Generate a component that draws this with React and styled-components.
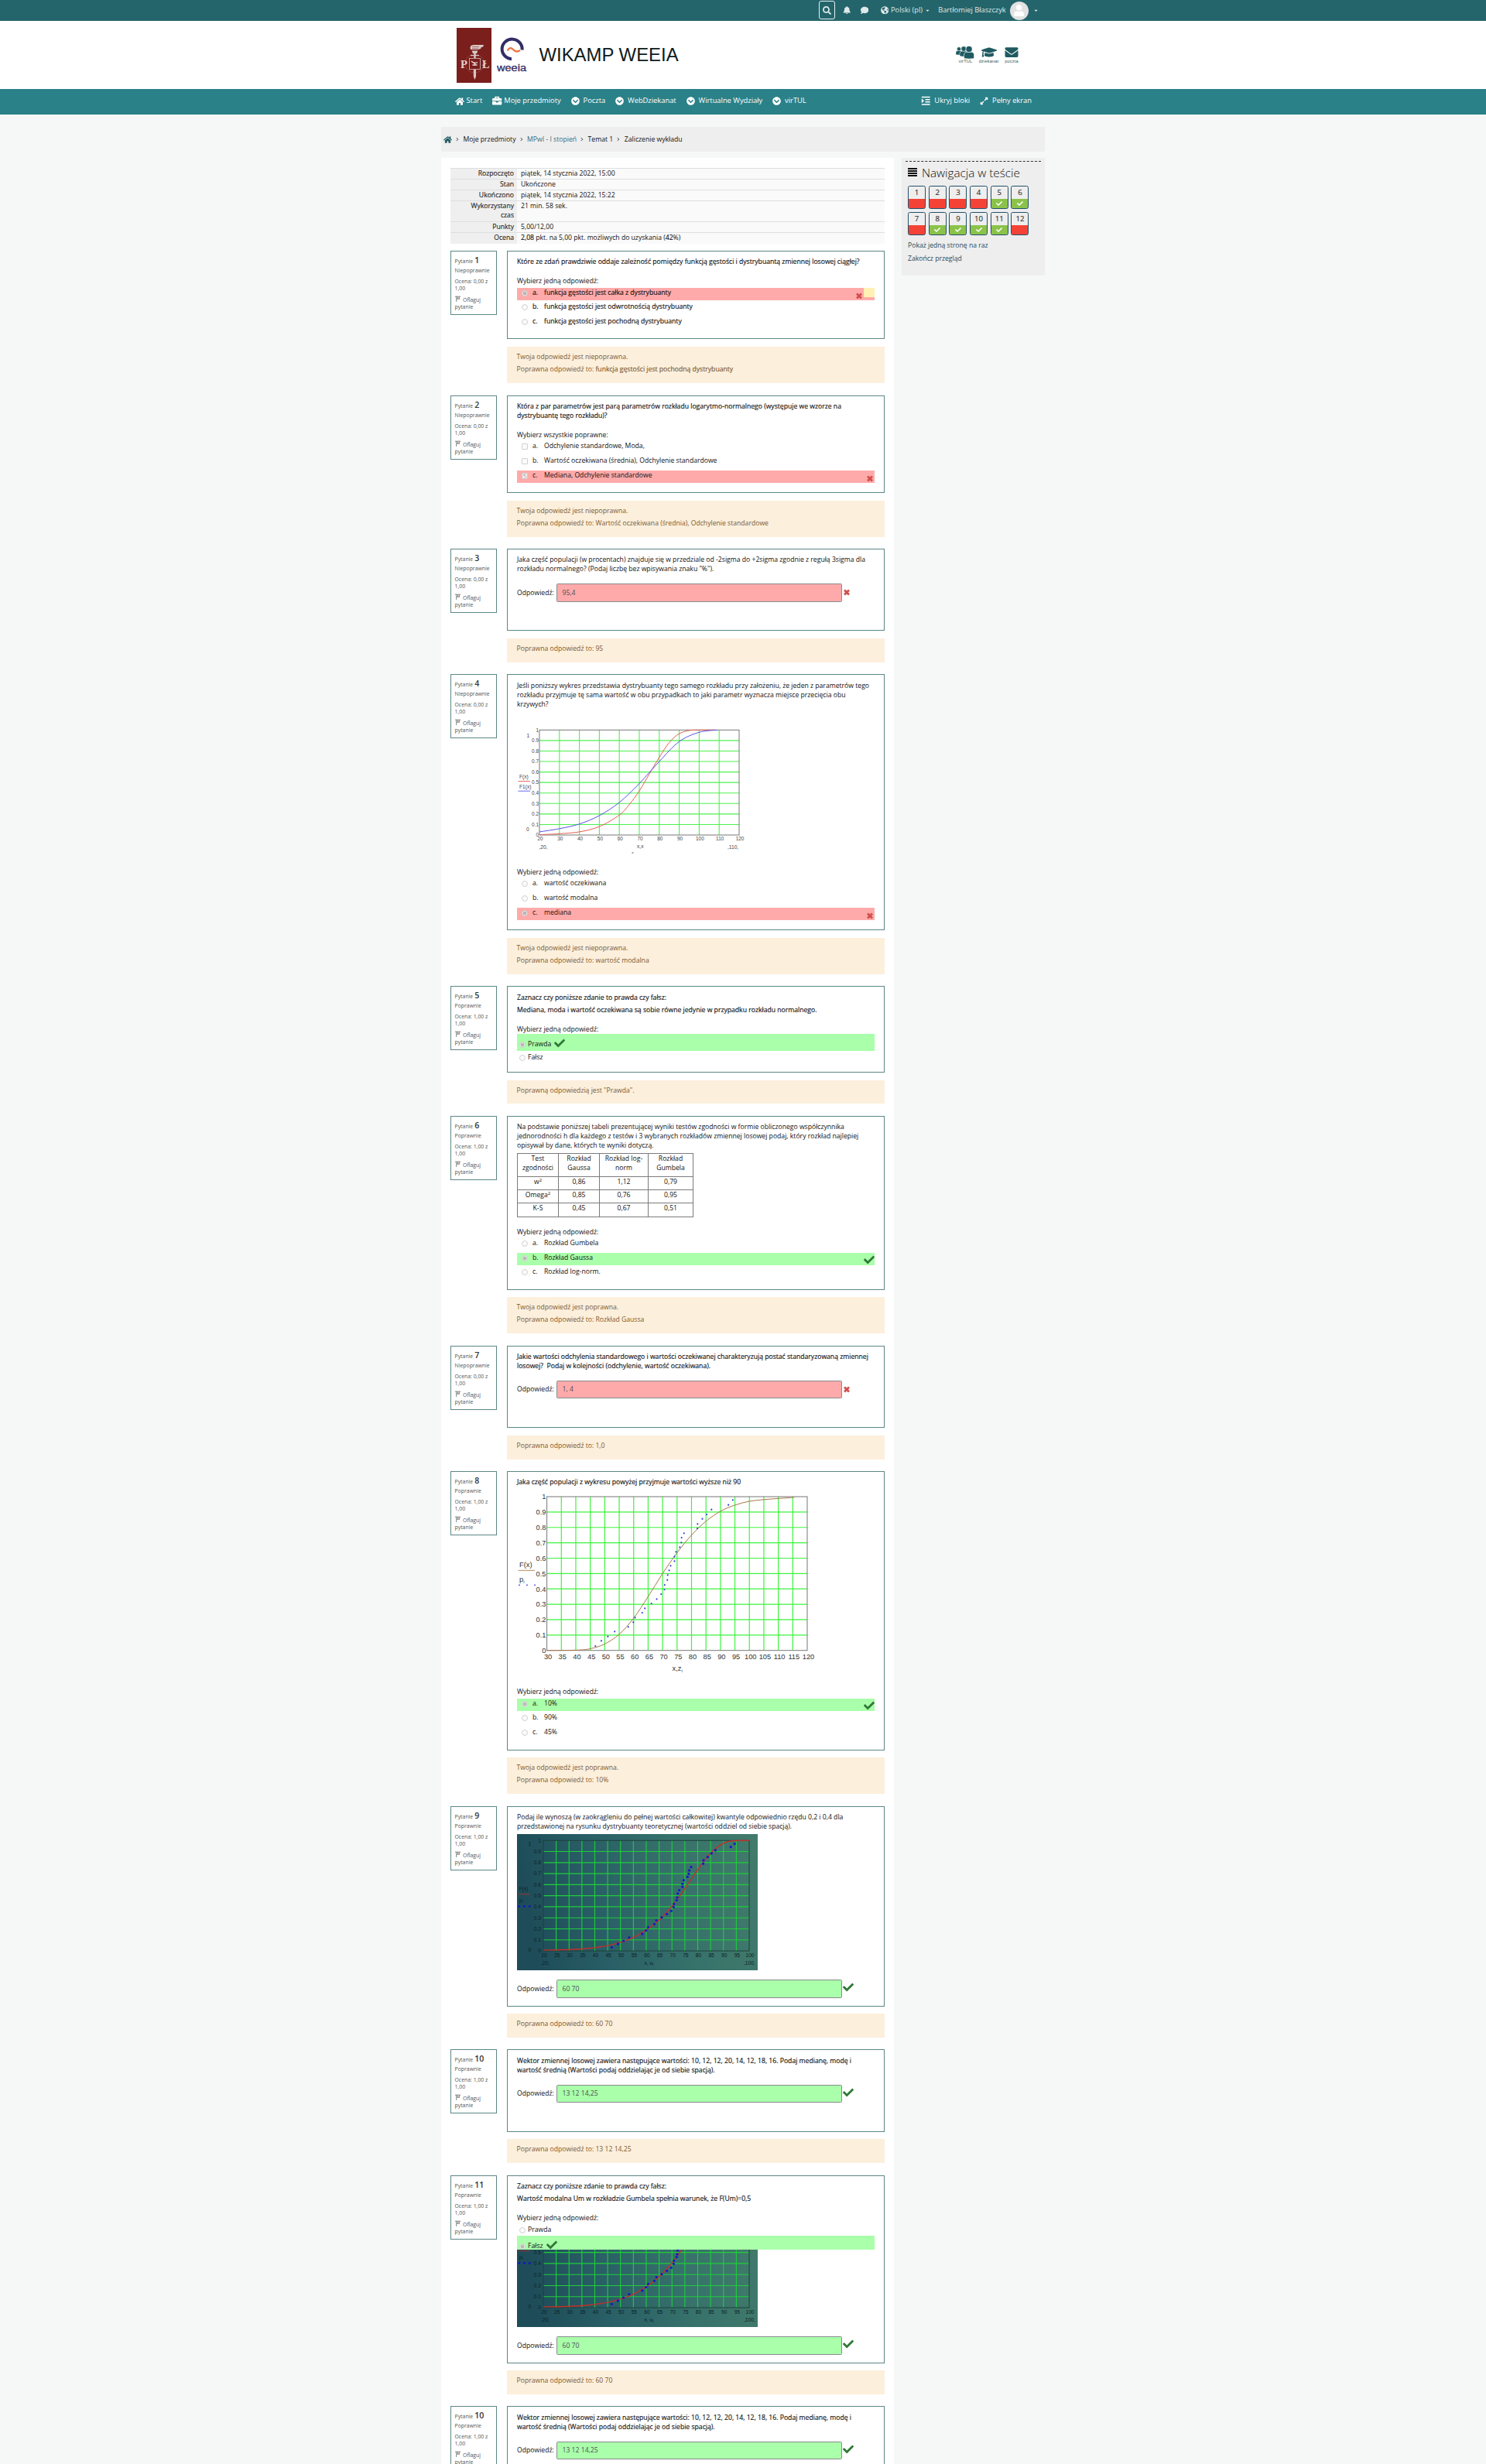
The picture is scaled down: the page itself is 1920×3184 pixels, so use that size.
import React from 'react';
import styled, { createGlobalStyle, css } from 'styled-components';
import {
  FaSearch, FaBell, FaComment, FaGlobeAmericas, FaHome, FaBriefcase,
  FaChevronCircleDown, FaIndent, FaExpandAlt, FaGraduationCap,
  FaEnvelope, FaCheck, FaCaretDown, FaUser,
} from 'react-icons/fa';

const sans = '"Open Sans", "Noto Sans", sans-serif';
const teal = '#5b8786';
const OK = '#aaffaa';
const BAD = '#ffaaaa';

const Global = createGlobalStyle`
  * { box-sizing: border-box; }
  body { margin: 0; background: #f6f8f8; font: 400 8.63px/12px ${sans}; color: #111; }
`;

const Page = styled.div`
  height: 3184px;
  overflow: hidden;
`;
const Inner = styled.div`
  width: 780px;
  margin: 0 auto;
  display: flex;
  align-items: center;
`;

/* ---------- top bar ---------- */
const TopBar = styled.header`
  background: #24656c;
  height: 27px;
  color: #dfe9ea;
  font-size: 9.27px;
  & > div { height: 26px; padding-left: 488px; }
  svg { display: block; flex: none; }
`;
const SearchButton = styled.span`
  width: 21px;
  height: 24px;
  border: 1px solid #e8f0f0;
  border-radius: 3px;
  display: flex;
  align-items: center;
  justify-content: center;
  margin-right: 10px;
`;
const BarItem = styled.span`
  display: flex;
  align-items: center;
  gap: 3px;
  white-space: nowrap;
  margin-right: ${(p) => p.$after || 0}px;
`;
const Avatar = styled.span`
  width: 24px;
  height: 24px;
  border-radius: 50%;
  background: #e2e2e2;
  overflow: hidden;
  display: flex;
  justify-content: center;
  margin: 1px 3px 0 2px;
`;

/* ---------- brand row ---------- */
const Brand = styled.div`
  background: #fff;
  height: 88px;
  & > div { height: 88px; padding-left: 20px; }
`;
const Title = styled.h1`
  margin: 0 auto 0 16px;
  font: 400 23.9px/30px "Liberation Sans", Arial, sans-serif;
  color: #0d1a1c;
`;
const Weeia = styled.svg`
  margin-left: 6.5px;
`;
const Quick = styled.span`
  display: flex;
  flex-direction: column;
  align-items: center;
  width: ${(p) => p.$w}px;
  height: 25px;
  margin-right: ${(p) => p.$after || 0}px;
  font: 400 5.6px/7px "Liberation Sans", Arial, sans-serif;
  letter-spacing: 0.2px;
  color: #1f5a61;
  svg { height: 17px; display: block; }
`;

/* ---------- nav ---------- */
const Nav = styled.nav`
  background: #2b8188;
  height: 33px;
  color: #fff;
  font-size: 9.33px;
  & > div { height: 30px; padding: 0 17px 0 18px; gap: 13.2px; }
`;
const NavItem = styled.span`
  display: flex;
  align-items: center;
  gap: ${(p) => p.$gap || 4.7}px;
  white-space: nowrap;
  margin-left: ${(p) => (p.$push ? 'auto' : 0)};
  svg { display: block; margin-top: 1px; }
`;

/* ---------- breadcrumb ---------- */
const Crumbs = styled.div`
  width: 780px;
  height: 32px;
  margin: 16px auto 8px;
  background: #eee;
  display: flex;
  align-items: center;
  padding-left: 3px;
  white-space: nowrap;
  svg { color: #1f5a61; display: block; }
`;
const Sep = styled.i`
  width: 4px;
  height: 4px;
  margin: 0 6.6px 0 4px;
  border: solid #555;
  border-width: 1px 1px 0 0;
  transform: rotate(45deg) scale(0.8);
`;
const Crumb = styled.span`
  color: ${(p) => (p.$link ? '#3c6b78' : '#111')};
`;

/* ---------- body ---------- */
const Columns = styled.div`
  width: 780px;
  margin: 0 auto;
  display: flex;
  align-items: flex-start;
  gap: 10px;
`;
const Main = styled.main`
  width: 585px;
  min-height: 2980px;
  background: #fff;
  padding: 13px 12px 0;
`;
const Summary = styled.table`
  width: 561px;
  border-collapse: collapse;
  margin-bottom: 9px;
  table-layout: fixed;
  th, td { padding: 0; vertical-align: top; border-top: 1px solid #dcdfe0; line-height: 12px; }
  th { width: 86px; background: #efefef; text-align: right; padding-right: 4px; font-weight: 400; -webkit-text-stroke: 0.12px; color: #222; }
  td { background: #fafafa; padding-left: 5px; }
`;
const SummaryRow = styled.tr`
  height: ${(p) => p.$h}px;
`;
const Strong = styled.b`
  font-weight: 400;
  -webkit-text-stroke: 0.14px;
`;

const Question = styled.section`
  display: grid;
  grid-template-columns: 60px 488px;
  column-gap: 13px;
  align-items: start;
  margin-bottom: ${(p) => p.$after}px;
`;
const Info = styled.aside`
  height: 83px;
  border: 1px solid ${teal};
  padding: 5px 0 0 4.5px;
  font-size: 6.9px;
  line-height: 9px;
  color: #555;
  white-space: nowrap;
`;
const InfoLine = styled.div`
  height: ${(p) => p.$h || 9}px;
  line-height: ${(p) => p.$h || 9}px;
  margin-top: ${(p) => p.$mt || 0}px;
  display: flex;
  align-items: baseline;
  gap: ${(p) => p.$gap || 2}px;
  ${(p) => p.$seam && css`clip-path: inset(2.5px 0 0 0);`}
  b { font-size: 10.6px; font-weight: 600; color: #333; }
  svg { align-self: center; margin-top: -3px; }
`;
const Formulation = styled.div`
  height: ${(p) => p.$h}px;
  border: 1px solid ${teal};
  padding: 0 12px;
`;
const Outcome = styled.div`
  height: ${(p) => p.$h}px;
  margin-top: ${(p) => p.$gap}px;
  background: #fcefdc;
  color: #7d5a30;
  padding: 7px 12.5px;
  display: flex;
  flex-direction: column;
  gap: 4.4px;
`;
const Stem = styled.div`
  margin-top: ${(p) => p.$mt}px;
  white-space: pre;
  ${(p) => p.$strong && css`-webkit-text-stroke: 0.14px;`}
`;
const Options = styled.div`
  margin-top: ${(p) => p.$mt || 0}px;
`;
const Option = styled.div`
  height: 16px;
  margin-bottom: ${(p) => (p.$bg ? 2 : 3)}px;
  background: ${(p) => p.$bg || 'transparent'};
  display: flex;
  align-items: flex-start;
  padding: 0 0 0 6px;
  & > em { font-style: normal; width: 15px; margin-left: 6px; }
`;
const Mark = styled.span`
  margin-left: auto;
  padding: ${(p) => (p.$ok ? '2px 0 0 0' : '6px 1px 0 0')};
  line-height: 0;
`;
const Patch = styled.span`
  width: 14px;
  height: 12px;
  background: #fff0b3;
`;
const Choice = styled.div`
  height: ${(p) => p.$h}px;
  background: ${(p) => p.$bg || 'transparent'};
  padding: ${(p) => p.$pt}px 0 0 3px;
  display: flex;
  gap: 3px;
  overflow: hidden;
  & > svg { margin: -2px 0 0 1px; flex: none; }
`;
const Control = styled.i`
  flex: none;
  width: 8px;
  height: 8px;
  margin-top: 3px;
  border: 1px solid #ccc;
  border-radius: ${(p) => (p.$square ? 1 : 4)}px;
  background: ${(p) => (p.$on ? 'radial-gradient(circle, #b4b4b4 0 2px, #eee 2.6px)' : '#fbfbfb')};
  opacity: 0.9;
  svg { display: block; }
`;
const AnswerRow = styled.div`
  margin-top: ${(p) => p.$mt}px;
  display: flex;
  align-items: center;
  span { width: 51px; }
  svg { margin-left: 1px; margin-top: ${(p) => (p.$ok ? -3 : 0)}px; }
`;
const Field = styled.div`
  width: 369px;
  height: ${(p) => p.$h}px;
  line-height: ${(p) => p.$h - 2}px;
  border: 1px solid #888c8e;
  border-radius: 1.5px;
  background: ${(p) => p.$bg};
  color: #495057;
  padding-left: 6.5px;
`;
const Grid = styled.table`
  margin-top: 4px;
  border-collapse: collapse;
  table-layout: fixed;
  width: 227px;
  height: 83px;
  td { border: 1px solid #7b7b7b; text-align: center; vertical-align: top; padding: 0; line-height: 12px; }
  sup { font-size: 6px; line-height: 0; vertical-align: 3px; }
`;
const GridRow = styled.tr`
  height: ${(p) => p.$h}px;
`;
const Chart = styled.svg`
  display: block;
  margin-top: ${(p) => p.$mt || 0}px;
  overflow: hidden;
`;

/* ---------- sidebar ---------- */
const Side = styled.aside`
  width: 185px;
  height: 152px;
  background: #eee;
  padding: 4px 5px 0;
`;
const SideTitle = styled.h2`
  margin: 0 0 7px;
  border-top: 1px dashed #333;
  padding: 3px 0 0 3px;
  height: 25px;
  font: 300 15.26px/20px ${sans};
  color: #111;
  display: flex;
  align-items: center;
  gap: 6px;
`;
const Tiles = styled.div`
  display: grid;
  grid-template-columns: repeat(6, 23px);
  column-gap: 3.7px;
  row-gap: 4px;
  padding-left: 3px;
`;
const Tile = styled.span`
  height: 30px;
  border: 1px solid #23506a;
  border-radius: 2.5px;
  background: linear-gradient(#eee 0 16px, ${(p) => (p.$ok ? '#8bc34a' : '#f44336')} 16px);
  display: flex;
  flex-direction: column;
  align-items: center;
  font-size: 9.6px;
  line-height: 15px;
  color: #333;
  -webkit-text-stroke: 0.15px;
  svg { color: #fff; margin-top: 3px; }
`;
const SideLink = styled.div`
  margin: ${(p) => p.$mt}px 0 0 3px;
  color: #264a58;
`;

/* ---------- chart drawing ---------- */
function smooth(points) {
  let d = `M${points[0][0]} ${points[0][1]}`;
  for (let i = 0; i < points.length - 1; i += 1) {
    const a = points[Math.max(0, i - 1)];
    const b = points[i];
    const c = points[i + 1];
    const e = points[Math.min(points.length - 1, i + 2)];
    d += `C${b[0] + (c[0] - a[0]) / 6} ${b[1] + (c[1] - a[1]) / 6} ${c[0] - (e[0] - b[0]) / 6} ${c[1] - (e[1] - b[1]) / 6} ${c[0]} ${c[1]}`;
  }
  return d;
}
function scale(box, min, max) {
  return ([x, y]) => [
    box.x + ((x - min) / (max - min)) * box.w,
    box.y + (1 - y) * box.h,
  ];
}
function Axes({ box, min, max, step, size, grid, gridWidth, frame, ink, labelX, labelY, shift = 0, top = 0 }) {
  const xs = [];
  for (let v = min; v <= max; v += step) xs.push(v);
  const ys = Array.from({ length: 11 }, (_, i) => i / 10);
  const at = scale(box, min, max);
  return (
    <g fontFamily="Liberation Sans, Arial, sans-serif" fontSize={size} fill={ink}>
      {xs.slice(1, -1).map((v) => {
        const [x] = at([v, 0]);
        return <line key={v} x1={x} x2={x} y1={box.y} y2={box.y + box.h} stroke={grid} strokeWidth={gridWidth} />;
      })}
      {ys.slice(1, -1).map((v) => {
        const [, y] = at([min, v]);
        return <line key={v} x1={box.x} x2={box.x + box.w} y1={y} y2={y} stroke={grid} strokeWidth={gridWidth} />;
      })}
      <rect x={box.x} y={box.y} width={box.w} height={box.h} fill="none" stroke={frame} />
      {xs.map((v) => <text key={v} x={at([v, 0])[0] + shift} y={labelY} textAnchor="middle">{v}</text>)}
      {ys.filter((v) => at([min, v])[1] > top).map((v) => (
        <text key={v} x={labelX} y={at([min, v])[1] + size * 0.36} textAnchor="end">{v}</text>
      ))}
    </g>
  );
}

function TwoCurves() {
  const box = { x: 29, y: 13.3, w: 258, h: 135.7 };
  const at = scale(box, 20, 120);
  const red = [[20, 0.003], [30, 0.012], [40, 0.03], [50, 0.08], [60, 0.19], [65, 0.29], [70, 0.42], [75, 0.58], [80, 0.74], [85, 0.88], [90, 0.965], [95, 0.995], [100, 1], [108, 1]];
  const blue = [[20, 0.03], [30, 0.06], [40, 0.105], [50, 0.185], [60, 0.31], [70, 0.49], [80, 0.7], [90, 0.89], [100, 0.978], [109, 1]];
  return (
    <Chart $mt={14} width="300" height="176" fontFamily="Liberation Sans, Arial, sans-serif" fontSize="6.6" fill="#444">
      <Axes box={box} min={20} max={120} step={10} size={6.4} grid="#4cf24c" gridWidth={1.1} frame="#777" ink="#444" labelX={28} labelY={156.2} shift={1} />
      <path d={smooth(red.map(at))} fill="none" stroke="#e2604f" />
      <path d={smooth(blue.map(at))} fill="none" stroke="#5a52e6" />
      <text x="12.5" y="23">1</text>
      <text x="12" y="144">0</text>
      <text x="3" y="76">F(x)</text>
      <line x1="1.5" x2="17" y1="79.5" y2="79.5" stroke="#ea6a6a" />
      <text x="3" y="89">F1(x)</text>
      <line x1="1.5" x2="17" y1="92.2" y2="92.2" stroke="#6a6af0" />
      <text x="28.5" y="166.5">,20,</text>
      <text x="155" y="166">x,x</text>
      <text x="272" y="166.5">,110,</text>
      <rect x="148.5" y="171.5" width="2" height="1" />
    </Chart>
  );
}

const dotsA = [[547, 771], [567, 751], [589, 734], [612, 715], [658, 697], [675, 679], [681, 661], [705, 642], [714, 625], [736, 606], [754, 589], [769, 570], [780, 552], [781, 534], [790, 515], [791, 496], [796, 478], [801, 460], [814, 442], [814, 424], [819, 406], [832, 388], [837, 370], [838, 351], [846, 334], [891, 315], [892, 298], [908, 278], [923, 261], [939, 242], [996, 224], [1011, 205]]
  .map(([x, y]) => [x / 2.6133 - 108, y / 3 - 56]);
const dotsB = [[602, 619], [623, 606], [642, 594], [661, 581], [705, 567], [718, 554], [725, 541], [746, 529], [753, 515], [771, 503], [788, 490], [803, 478], [811, 463], [812, 451], [821, 437], [823, 426], [825, 411], [830, 398], [841, 385], [841, 373], [845, 359], [858, 346], [862, 334], [864, 321], [870, 308], [911, 295], [912, 282], [926, 269], [939, 255], [952, 243], [1004, 230], [1017, 218]]
  .map(([x, y]) => [x / 2.6133 - 108, y / 3 - 60]);

function Population() {
  const box = { x: 38.6, y: 8, w: 336.4, h: 198.7 };
  const at = scale(box, 30, 120);
  const curve = [[30, 0], [40, 0.002], [45, 0.011], [50, 0.042], [55, 0.105], [60, 0.21], [65, 0.35], [70, 0.5], [75, 0.635], [80, 0.75], [85, 0.84], [90, 0.905], [95, 0.945], [100, 0.97], [105, 0.981], [110, 0.988], [115.5, 0.995]];
  return (
    <Chart $mt={5} width="400" height="236" fontFamily="Liberation Sans, Arial, sans-serif" fontSize="9.4" fill="#333">
      <Axes box={box} min={30} max={120} step={5} size={9.3} grid="#3df43d" gridWidth={1.2} frame="#777" ink="#333" labelX={37.5} labelY={218} shift={1.5} />
      <path d={smooth(curve.map(at))} fill="none" stroke="#a9764a" />
      {dotsA.map(([x, y]) => <circle key={`${x} ${y}`} cx={x} cy={y} r="1.05" fill="#3030e0" />)}
      <text x="3" y="99">F(x)</text>
      <line x1="1.5" x2="23" y1="103.3" y2="103.3" stroke="#b88a60" />
      <text x="3" y="117.5">p<tspan fontSize="6" dy="2">i</tspan></text>
      {[3, 13, 23].map((x) => <circle key={x} cx={x} cy="122.3" r="1" fill="#6a5ae8" />)}
      <text x="200.5" y="233">x,z<tspan fontSize="6" dy="2">i</tspan></text>
    </Chart>
  );
}

function Quantiles({ top = 0, mt = 0 }) {
  const box = { x: 34, y: 8.3, w: 266, h: 142.7 };
  const at = scale(box, 20, 100);
  const id = `shade${top}`;
  const curve = [[20, 0.008], [27, 0.01], [35, 0.018], [40, 0.03], [45, 0.048], [50, 0.078], [55, 0.122], [60, 0.19], [65, 0.28], [70, 0.405], [75, 0.565], [80, 0.735], [85, 0.885], [90, 0.975], [94, 0.998], [100, 1]];
  return (
    <Chart $mt={mt} width="311" height={176 - top} viewBox={`0 ${top} 311 ${176 - top}`} fontFamily="Liberation Sans, Arial, sans-serif" fontSize="6.6" fill="#0c2026">
      <defs>
        <linearGradient id={id} x1="0" y1="0.1" x2="1" y2="0">
          <stop offset="0" stopColor="#1e4d59" />
          <stop offset="0.3" stopColor="#295f66" />
          <stop offset="0.65" stopColor="#37726b" />
          <stop offset="1" stopColor="#427b6b" />
        </linearGradient>
      </defs>
      <rect width="311" height="176" fill={`url(#${id})`} />
      <Axes box={box} min={20} max={100} step={5} size={6.6} grid="#1fce3a" gridWidth={1.1} frame="#1c4238" ink="#0c2026" labelX={31} labelY={159} shift={1} top={top} />
      <path d={smooth(curve.map(at))} fill="none" stroke="#c22f2c" strokeWidth="1.4" />
      {dotsB.filter(([, y]) => y > top - 1).map(([x, y]) => (
        <rect key={`${x} ${y}`} x={x - 1.5} y={y - 1.4} width="3" height="2.8" rx="0.8" fill="#1418c8" />
      ))}
      {top === 0 && <text x="14.5" y="14.5">1</text>}
      <text x="14.5" y="151.5">0</text>
      {top === 0 && <text x="2.5" y="73">F(x)</text>}
      <line x1="2" x2="17" y1="77.7" y2="77.7" stroke="#a03030" />
      <text x="3" y="88">p<tspan fontSize="4.5" dy="1">i</tspan></text>
      {[2.8, 9.5, 16.3].map((x) => <rect key={x} x={x - 1.5} y="92" width="3" height="2.8" rx="0.8" fill="#1418c8" />)}
      <text x="31" y="169">,20,</text>
      <text x="164.5" y="169">x, u<tspan fontSize="4.5" dy="1">i</tspan></text>
      <text x="293" y="169">,100,</text>
    </Chart>
  );
}

/* ---------- logos and icons ---------- */
function UniversityLogo() {
  return (
    <svg width="45" height="71" viewBox="0 0 45 71">
      <rect width="45" height="71" fill="#7a1f1c" />
      <g fill="none" stroke="#b98c88" strokeWidth="0.8">
        <circle cx="23.3" cy="46" r="12" strokeDasharray="2 1" opacity="0.6" />
        <rect x="16.5" y="39.5" width="14" height="14" fill="#7a1f1c" stroke="#d8c2c0" />
      </g>
      <path d="M18 28q-2-6 4-6h13q0 2.500-4 3.500q2 1-3 2.500z" fill="#d8c6c4" />
      <path d="M20 24.500h9M20 26.700h8" stroke="#7a1f1c" strokeWidth="0.5" />
      <path d="M19.500 29.500h8l-1.500 3.500h-5zM22.300 33h2.400v6h-2.400zM18 35h11v1.200h-11zM21.800 54h3.200v9l-1.600 4l-1.600-4z" fill="#d8c6c4" />
      <path d="M19 43q4 4 8 1.500M20.500 48h6M23.500 44.500v4" stroke="#eee2e0" strokeWidth="1.4" fill="none" />
      <g fill="#e2d2d0" fontFamily="Liberation Serif, Times New Roman, serif" fontWeight="700" fontSize="15">
        <text x="5" y="52" textLength="9" lengthAdjust="spacingAndGlyphs">P</text>
        <text x="33" y="52" textLength="9.5" lengthAdjust="spacingAndGlyphs">Ł</text>
      </g>
    </svg>
  );
}
function FacultyLogo() {
  return (
    <Weeia width="39" height="46" viewBox="0 0 39 46">
      <path d="M32.600 16.500A13 12.800 0 1 0 19 28.200" fill="none" stroke="#322e66" strokeWidth="4" />
      <path d="M13.500 17.500q3.500-6 7.500-1.500t9 1" fill="none" stroke="#ee7442" strokeWidth="2.300" />
      <text x="0" y="44" textLength="38" lengthAdjust="spacingAndGlyphs" fontFamily="Liberation Sans, Arial, sans-serif" fontSize="12" fill="#322e66" stroke="#322e66" strokeWidth="0.300">weeia</text>
      <path d="M12.500 40.500q2-1.600 3 0t3-.5" fill="none" stroke="#ee7442" strokeWidth="1" />
    </Weeia>
  );
}
function PeopleIcon() {
  const person = (x, y, s) => (
    <g transform={`translate(${x} ${y}) scale(${s})`} stroke="#fff" strokeWidth="0.800">
      <path d="M0 20v-5q0-5 5-5h6q5 0 5 5v5q-8 2-16 0z" />
      <circle cx="8" cy="5.500" r="5" />
    </g>
  );
  return (
    <svg width="25" height="17" viewBox="0 0 25 17" fill="#1f5a61">
      {person(0, 1.5, 0.5)}
      {person(5, 0.5, 0.65)}
      {person(10.5, 0, 0.82)}
    </svg>
  );
}
const Cross = () => (
  <svg width="10" height="9" viewBox="0 0 10 9" stroke="#d2504e" strokeWidth="2.900">
    <path d="M2 1.500l6 6M8 1.500l-6 6" />
  </svg>
);
const Tick = ({ size = 14 }) => <FaCheck size={size} color="#2f7a35" />;
const Flag = () => (
  <svg width="7" height="8" viewBox="0 0 7 8" fill="none" stroke="#777" strokeWidth="0.900">
    <path d="M1.700 8V1M0 1.200h6.800L4.800 3L6 4.200H2M3.500 1.500v2.500" />
  </svg>
);
const Bars = () => (
  <svg width="12" height="11" viewBox="0 0 12 11" stroke="#111" strokeWidth="1.900">
    <path d="M0 1h12M0 4h12M0 7h12M0 10h12" />
  </svg>
);

/* ---------- question parts ---------- */
function QuestionInfo({ no, ok, seam }) {
  return (
    <Info>
      <InfoLine $h={12}>Pytanie <b>{no}</b></InfoLine>
      <InfoLine $mt={3}>{ok ? 'Poprawnie' : 'Niepoprawnie'}</InfoLine>
      <InfoLine $mt={5} $seam={seam}>{ok ? 'Ocena: 1,00 z' : 'Ocena: 0,00 z'}</InfoLine>
      <InfoLine>1,00</InfoLine>
      <InfoLine $mt={6} $gap={3.6}><Flag />Oflaguj</InfoLine>
      <InfoLine>pytanie</InfoLine>
    </Info>
  );
}
function Block({ no, ok, seam, h, gap, oh, after, outcome, children }) {
  return (
    <Question $after={after}>
      <QuestionInfo no={no} ok={ok} seam={seam} />
      <div>
        <Formulation $h={h}>{children}</Formulation>
        <Outcome $gap={gap} $h={oh}>
          {outcome.map((line, i) => <div key={i}>{line}</div>)}
        </Outcome>
      </div>
    </Question>
  );
}
function Choices({ items, picked, ok, square, strong, patch, mt }) {
  return (
    <Options $mt={mt}>
      {items.map((text, i) => {
        const on = i === picked;
        return (
          <Option key={text} $bg={on ? (ok ? OK : BAD) : null}>
            <Control $on={on} $square={square}>
              {on && square ? <FaCheck size={6} color="#fff" /> : null}
            </Control>
            <em>{strong ? <Strong>{'abc'[i]}.</Strong> : `${'abc'[i]}.`}</em>
            {strong ? <Strong>{text}</Strong> : text}
            {on && <Mark $ok={ok}>{ok ? <Tick /> : <Cross />}</Mark>}
            {on && patch && <Patch />}
          </Option>
        );
      })}
    </Options>
  );
}
function Answer({ value, ok, h, mt }) {
  return (
    <AnswerRow $mt={mt} $ok={ok}>
      <span>Odpowiedź:</span>
      <Field $h={h} $bg={ok ? OK : BAD}>{value}</Field>
      {ok ? <Tick /> : <Cross />}
    </AnswerRow>
  );
}
const ONE = 'Wybierz jedną odpowiedź:';

function VectorQuestion({ after }) {
  return (
    <Block no={10} ok h={107} gap={9} oh={31} after={after} outcome={['Poprawna odpowiedź to: 13 12 14,25']}>
      <Stem $mt={8} $strong>{'Wektor zmiennej losowej zawiera następujące wartości: 10, 12, 12, 20, 14, 12, 18, 16. Podaj medianę, modę i\nwartość średnią (Wartości podaj oddzielając je od siebie spacją).'}</Stem>
      <Answer ok value="13 12 14,25" h={23} mt={13} />
    </Block>
  );
}

const tiles = [0, 0, 0, 0, 1, 1, 0, 1, 1, 1, 1, 0];
const fitRows = [['0,86', '1,12', '0,79'], ['0,85', '0,76', '0,95'], ['0,45', '0,67', '0,51']];

export default function App() {
  return (
    <Page>
      <Global />
      <TopBar>
        <Inner>
          <SearchButton><FaSearch size={11} /></SearchButton>
          <BarItem $after={12}><FaBell size={10.5} /></BarItem>
          <BarItem $after={15.5}><FaComment size={10.5} /></BarItem>
          <BarItem $after={10.2}><FaGlobeAmericas size={10.5} />Polski (pl)<FaCaretDown size={7} /></BarItem>
          <BarItem>Bartłomiej Błaszczyk
            <Avatar><FaUser size={15} color="#fff" style={{ marginTop: 4 }} /></Avatar>
            <FaCaretDown size={7} />
          </BarItem>
        </Inner>
      </TopBar>
      <Brand>
        <Inner>
          <UniversityLogo />
          <FacultyLogo />
          <Title>WIKAMP WEEIA</Title>
          <Quick $w={25} $after={5}><PeopleIcon />virTUL</Quick>
          <Quick $w={25} $after={8}><FaGraduationCap size={20} />dziekanat</Quick>
          <Quick $w={18} $after={34}><FaEnvelope size={18} />poczta</Quick>
        </Inner>
      </Brand>
      <Nav>
        <Inner>
          <NavItem $gap={2.5}><FaHome size={12} />Start</NavItem>
          <NavItem $gap={2.5}><FaBriefcase size={12.3} />Moje przedmioty</NavItem>
          {['Poczta', 'WebDziekanat', 'Wirtualne Wydziały', 'virTUL'].map((t) => (
            <NavItem key={t}><FaChevronCircleDown size={11} />{t}</NavItem>
          ))}
          <NavItem $push><FaIndent size={12.5} />Ukryj bloki</NavItem>
          <NavItem><FaExpandAlt size={11} />Pełny ekran</NavItem>
        </Inner>
      </Nav>
      <Crumbs>
        <FaHome size={11} />
        <Sep /><Crumb>Moje przedmioty</Crumb>
        <Sep /><Crumb $link>MPwI - I stopień</Crumb>
        <Sep /><Crumb>Temat 1</Crumb>
        <Sep /><Crumb>Zaliczenie wykładu</Crumb>
      </Crumbs>
      <Columns>
        <Main>
          <Summary>
            <tbody>
              <SummaryRow $h={14}><th>Rozpoczęto</th><td>piątek, 14 stycznia 2022, 15:00</td></SummaryRow>
              <SummaryRow $h={14}><th>Stan</th><td>Ukończone</td></SummaryRow>
              <SummaryRow $h={14}><th>Ukończono</th><td>piątek, 14 stycznia 2022, 15:22</td></SummaryRow>
              <SummaryRow $h={27}><th>Wykorzystany<br />czas</th><td>21 min. 58 sek.</td></SummaryRow>
              <SummaryRow $h={14}><th>Punkty</th><td>5,00/12,00</td></SummaryRow>
              <SummaryRow $h={14}><th>Ocena</th><td><Strong>2,08</Strong> pkt. na 5,00 pkt. możliwych do uzyskania (<Strong>42</Strong>%)</td></SummaryRow>
            </tbody>
          </Summary>

          <Block no={1} h={114} gap={10} oh={47} after={16} outcome={['Twoja odpowiedź jest niepoprawna.', <>Poprawna odpowiedź to: <Strong>funkcja gęstości jest pochodną dystrybuanty</Strong></>]}>
            <Stem $mt={7} $strong>Które ze zdań prawdziwie oddaje zależność pomiędzy funkcją gęstości i dystrybuantą zmiennej losowej ciągłej?</Stem>
            <Stem $mt={13}>{ONE}</Stem>
            <Choices mt={3} strong patch picked={0} items={['funkcja gęstości jest całka z dystrybuanty', 'funkcja gęstości jest odwrotnością dystrybuanty', 'funkcja gęstości jest pochodną dystrybuanty']} />
          </Block>

          <Block no={2} h={126} gap={10} oh={47} after={15} outcome={['Twoja odpowiedź jest niepoprawna.', 'Poprawna odpowiedź to: Wartość oczekiwana (średnia), Odchylenie standardowe']}>
            <Stem $mt={7} $strong>{'Która z par parametrów jest parą parametrów rozkładu logarytmo-normalnego (występuje we wzorze na\ndystrybuantę tego rozkładu)?'}</Stem>
            <Stem $mt={13}>Wybierz wszystkie poprawne:</Stem>
            <Choices mt={2} square picked={2} items={['Odchylenie standardowe, Moda,', 'Wartość oczekiwana (średnia), Odchylenie standardowe', 'Mediana, Odchylenie standardowe']} />
          </Block>

          <Block no={3} h={106} gap={10} oh={31} after={15} outcome={['Poprawna odpowiedź to: 95']}>
            <Stem $mt={7}>{'Jaka część populacji (w procentach) znajduje się w przedziale od -2sigma do +2sigma zgodnie z regułą 3sigma dla\nrozkładu normalnego? (Podaj liczbę bez wpisywania znaku "%").'}</Stem>
            <Answer value="95,4" h={24} mt={13} />
          </Block>

          <Block no={4} h={331} gap={10} oh={47} after={15} outcome={['Twoja odpowiedź jest niepoprawna.', 'Poprawna odpowiedź to: wartość modalna']}>
            <Stem $mt={8}>{'Jeśli poniższy wykres przedstawia dystrybuanty tego samego rozkładu przy założeniu, że jeden z parametrów tego\nrozkładu przyjmuje tę sama wartość w obu przypadkach to jaki parametr wyznacza miejsce przecięcia obu\nkrzywych?'}</Stem>
            <TwoCurves />
            <Stem $mt={15}>{ONE}</Stem>
            <Choices mt={2} picked={2} items={['wartość oczekiwana', 'wartość modalna', 'mediana']} />
          </Block>

          <Block no={5} ok h={112} gap={10} oh={30} after={16} outcome={['Poprawną odpowiedzią jest "Prawda".']}>
            <Stem $mt={8} $strong>Zaznacz czy poniższe zdanie to prawda czy fałsz:</Stem>
            <Stem $mt={4} $strong>Mediana, moda i wartość oczekiwana są sobie równe jedynie w przypadku rozkładu normalnego.</Stem>
            <Stem $mt={13}>{ONE}</Stem>
            <Choice $h={22} $pt={7} $bg={OK}><Control $on />Prawda<Tick /></Choice>
            <Choice $h={17} $pt={2.5}><Control />Fałsz</Choice>
          </Block>

          <Block no={6} ok h={225} gap={9} oh={47} after={16} outcome={['Twoja odpowiedź jest poprawna.', 'Poprawna odpowiedź to: Rozkład Gaussa']}>
            <Stem $mt={7}>{'Na podstawie poniższej tabeli prezentującej wyniki testów zgodności w formie obliczonego współczynnika\njednorodności h dla każdego z testów i 3 wybranych rozkładów zmiennej losowej podaj, który rozkład najlepiej\nopisywał by dane, których te wyniki dotyczą.'}</Stem>
            <Grid>
              <colgroup><col width="53" /><col width="53" /><col width="63" /><col width="58" /></colgroup>
              <tbody>
                <GridRow $h={30}>
                  <td>Test<br />zgodności</td><td>Rozkład<br />Gaussa</td><td>Rozkład log-<br />norm</td><td>Rozkład<br />Gumbela</td>
                </GridRow>
                {fitRows.map((row, i) => (
                  <GridRow key={row[0]} $h={i === 2 ? 18 : 17}>
                    <td>{[<>w<sup>2</sup></>, <>Omega<sup>2</sup></>, 'K-S'][i]}</td>
                    {row.map((v) => <td key={v}>{v}</td>)}
                  </GridRow>
                ))}
              </tbody>
            </Grid>
            <Stem $mt={13}>{ONE}</Stem>
            <Choices mt={2} ok picked={1} items={['Rozkład Gumbela', 'Rozkład Gaussa', 'Rozkład log-norm.']} />
          </Block>

          <Block no={7} h={106} gap={10} oh={31} after={15} outcome={['Poprawna odpowiedź to: 1,0']}>
            <Stem $mt={7} $strong>{'Jakie wartości odchylenia standardowego i wartości oczekiwanej charakteryzują postać standaryzowaną zmiennej\nlosowej?  Podaj w kolejności (odchylenie, wartość oczekiwana).'}</Stem>
            <Answer value="1, 4" h={23} mt={13} />
          </Block>

          <Block no={8} ok seam h={361} gap={9} oh={47} after={16} outcome={['Twoja odpowiedź jest poprawna.', 'Poprawna odpowiedź to: 10%']}>
            <Stem $mt={7} $strong>Jaka część populacji z wykresu powyżej przyjmuje wartości wyższe niż 90</Stem>
            <Population />
            <Stem $mt={18}>{ONE}</Stem>
            <Choices mt={3} ok picked={0} items={['10%', '90%', '45%']} />
          </Block>

          <Block no={9} ok h={259} gap={9} oh={31} after={15} outcome={['Poprawna odpowiedź to: 60 70']}>
            <Stem $mt={7}>{'Podaj ile wynoszą (w zaokrągleniu do pełnej wartości całkowitej) kwantyle odpowiednio rzędu 0,2 i 0,4 dla\nprzedstawionej na rysunku dystrybuanty teoretycznej (wartości oddziel od siebie spacją).'}</Stem>
            <Quantiles mt={4} />
            <Answer ok value="60 70" h={24} mt={12} />
          </Block>

          <VectorQuestion after={16} />

          <Block no={11} ok h={243} gap={9} oh={31} after={15} outcome={['Poprawna odpowiedź to: 60 70']}>
            <Stem $mt={7} $strong>Zaznacz czy poniższe zdanie to prawda czy fałsz:</Stem>
            <Stem $mt={4} $strong>Wartość modalna Um w rozkładzie Gumbela spełnia warunek, że F(Um)=0,5</Stem>
            <Stem $mt={13}>{ONE}</Stem>
            <Choice $h={17} $pt={3}><Control />Prawda</Choice>
            <Choice $h={18} $pt={7} $bg={OK}><Control $on />Fałsz<Tick /></Choice>
            <Quantiles top={76} />
            <Answer ok value="60 70" h={24} mt={12} />
          </Block>

          <VectorQuestion after={0} />
        </Main>
        <Side>
          <SideTitle><Bars />Nawigacja w teście</SideTitle>
          <Tiles>
            {tiles.map((ok, i) => (
              <Tile key={i} $ok={ok}>{i + 1}{ok ? <FaCheck size={8} /> : null}</Tile>
            ))}
          </Tiles>
          <SideLink $mt={7}>Pokaż jedną stronę na raz</SideLink>
          <SideLink $mt={5}>Zakończ przegląd</SideLink>
        </Side>
      </Columns>
    </Page>
  );
}
